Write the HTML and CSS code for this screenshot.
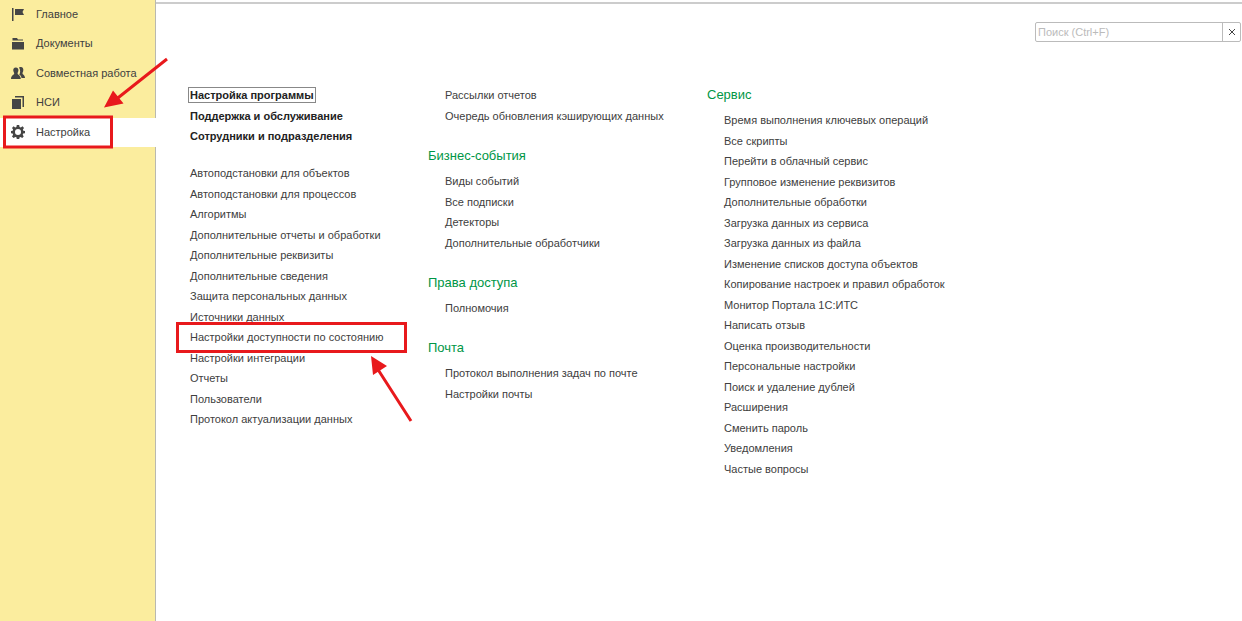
FILE: index.html
```html
<!DOCTYPE html>
<html lang="ru">
<head>
    <meta charset="UTF-8">
    <meta name="viewport" content="width=device-width, initial-scale=1.0">
    <title>Настройка</title>
    <link rel="stylesheet" href="styles.css">
</head>
<body>
    <!-- Sections -->
    <nav class="sidebar">
        <a href="#" class="section">
            <svg class="icon" viewBox="0 0 14 14"><path d="M1 1h1.500v13H1zM4 2h9l-1.500 3L13 8H4z"/></svg>
            Главное
        </a>
        <a href="#" class="section">
            <svg class="icon" viewBox="0 0 14 14"><path d="M1.500 4.500V2h4.500l1 1.500h5v1zM1 6h12v7.500H1z"/></svg>
            Документы
        </a>
        <a href="#" class="section">
            <svg class="icon" viewBox="0 0 14 14"><path d="M8 1.500c3-1.500 5 .5 4.200 3.500-.2 1-.7 1.500-.7 2.500 0 1 2.500 1.500 2.500 4.500h-3.500c-.3-2-1-2.500-2.200-3.200C9.500 6.500 9.500 4 8 1.500z"/><path d="M4.800 1.500c2 0 2.900 1.400 2.600 3.300-.2 1.200-.8 1.800-.8 2.700 0 1.500 3.200 1.500 3.200 5.500H0c0-4 3.200-4 3.200-5.500 0-.9-.7-1.500-.9-2.700C2 2.900 2.900 1.500 4.800 1.500z"/></svg>
            Совместная работа
        </a>
        <a href="#" class="section">
            <svg class="icon" viewBox="0 0 14 14"><path d="M1 4h9v10H1zM4 1h9v11h-1.500V2.500H4z"/></svg>
            НСИ
        </a>
        <a href="#" class="section active">
            <svg class="icon" viewBox="0 0 14 14"><path fill-rule="evenodd" d="M5.800 0h2.400l.4 2 1.200.5L11.500 1.300l1.500 1.600-1.100 1.700.4 1.100 1.700.3v2.200l-1.800.4-.5 1.200 1 1.600-1.500 1.600-1.600-1.100-1.100.5-.3 1.800H5.800l-.4-1.900-1.100-.4-1.700 1.100L1 11.400l1.100-1.600-.5-1.200L0 8.200V6l1.700-.3.400-1.100L1 2.900l1.600-1.600 1.600 1.200 1.200-.5zM7 4a3 3 0 1 0 0 6 3 3 0 0 0 0-6z"/></svg>
            Настройка
        </a>
    </nav>

    <main class="content">
        <form class="search">
            <input type="text" class="search-input" placeholder="Поиск (Ctrl+F)" aria-label="Поиск">
            <button type="reset" class="search-clear" aria-label="Очистить">
                <svg viewBox="0 0 8 8"><path d="M1 1l6 6M7 1L1 7"/></svg>
            </button>
        </form>

        <!-- Commands -->
        <div class="columns">
            <div class="column">
                <ul class="commands main-commands">
                    <li><a href="#" class="focused">Настройка программы</a></li>
                    <li><a href="#">Поддержка и обслуживание</a></li>
                    <li><a href="#">Сотрудники и подразделения</a></li>
                </ul>
                <ul class="commands">
                    <li><a href="#">Автоподстановки для объектов</a></li>
                    <li><a href="#">Автоподстановки для процессов</a></li>
                    <li><a href="#">Алгоритмы</a></li>
                    <li><a href="#">Дополнительные отчеты и обработки</a></li>
                    <li><a href="#">Дополнительные реквизиты</a></li>
                    <li><a href="#">Дополнительные сведения</a></li>
                    <li><a href="#">Защита персональных данных</a></li>
                    <li><a href="#">Источники данных</a></li>
                    <li><a href="#">Настройки доступности по состоянию</a></li>
                    <li><a href="#">Настройки интеграции</a></li>
                    <li><a href="#">Отчеты</a></li>
                    <li><a href="#">Пользователи</a></li>
                    <li><a href="#">Протокол актуализации данных</a></li>
                </ul>
            </div>

            <div class="column">
                <ul class="commands nested">
                    <li><a href="#">Рассылки отчетов</a></li>
                    <li><a href="#">Очередь обновления кэширующих данных</a></li>
                </ul>
                <section class="group">
                    <h2>Бизнес-события</h2>
                    <ul class="commands nested">
                        <li><a href="#">Виды событий</a></li>
                        <li><a href="#">Все подписки</a></li>
                        <li><a href="#">Детекторы</a></li>
                        <li><a href="#">Дополнительные обработчики</a></li>
                    </ul>
                </section>
                <section class="group">
                    <h2>Права доступа</h2>
                    <ul class="commands nested">
                        <li><a href="#">Полномочия</a></li>
                    </ul>
                </section>
                <section class="group">
                    <h2>Почта</h2>
                    <ul class="commands nested">
                        <li><a href="#">Протокол выполнения задач по почте</a></li>
                        <li><a href="#">Настройки почты</a></li>
                    </ul>
                </section>
            </div>

            <div class="column">
                <section class="group">
                    <h2>Сервис</h2>
                    <ul class="commands nested">
                        <li><a href="#">Время выполнения ключевых операций</a></li>
                        <li><a href="#">Все скрипты</a></li>
                        <li><a href="#">Перейти в облачный сервис</a></li>
                        <li><a href="#">Групповое изменение реквизитов</a></li>
                        <li><a href="#">Дополнительные обработки</a></li>
                        <li><a href="#">Загрузка данных из сервиса</a></li>
                        <li><a href="#">Загрузка данных из файла</a></li>
                        <li><a href="#">Изменение списков доступа объектов</a></li>
                        <li><a href="#">Копирование настроек и правил обработок</a></li>
                        <li><a href="#">Монитор Портала 1С:ИТС</a></li>
                        <li><a href="#">Написать отзыв</a></li>
                        <li><a href="#">Оценка производительности</a></li>
                        <li><a href="#">Персональные настройки</a></li>
                        <li><a href="#">Поиск и удаление дублей</a></li>
                        <li><a href="#">Расширения</a></li>
                        <li><a href="#">Сменить пароль</a></li>
                        <li><a href="#">Уведомления</a></li>
                        <li><a href="#">Частые вопросы</a></li>
                    </ul>
                </section>
            </div>
        </div>
    </main>

    <!-- Red frames and arrows over the page -->
    <svg class="marks" width="420" height="430" viewBox="0 0 420 430">
        <rect x="4.500" y="117" width="107" height="30"/>
        <rect x="177.500" y="323.500" width="228" height="28"/>
        <path d="M167 59L114 101M411 421L377 368"/>
        <path class="head" d="M104 107.500L113 90.500L123.500 103.500zM371 356L387 366L373 375z"/>
    </svg>
</body>
</html>
```
FILE: styles.css
```css
* {
    box-sizing: border-box;
}
body {
    display: flex;
    min-height: 100vh;
    margin: 0;
    font-family: "Liberation Sans", Arial, sans-serif;
    font-size: 11px;
    color: #404040;
    background-color: #fff;
}
a {
    color: inherit;
    text-decoration: none;
}
.sidebar {
    flex: none;
    width: 156px;
    background-color: #fbed9e;
    border-right: 1px solid #b9b9b0;
}
.section {
    display: flex;
    align-items: center;
    gap: 11px;
    height: 29px;
    padding: 0 0 2px 11px;
    white-space: nowrap;
}
.section:nth-child(even) {
    height: 30px;
}
.section.active {
    margin-right: -1px;
    background-color: #fff;
}
.icon {
    flex: none;
    width: 14px;
    height: 14px;
    fill: #454545;
}
.content {
    flex: 1;
    margin-top: 2px;
    border-top: 2px solid #ccc;
}
.search {
    display: flex;
    width: 206px;
    height: 20px;
    margin: 18px 1px 0 auto;
    border: 1px solid #bbb;
    border-radius: 2px;
}
.search-input {
    flex: 1;
    min-width: 0;
    padding: 0 2px;
    border: none;
    outline: none;
    background: none;
    font: inherit;
}
.search-input::placeholder {
    color: #bbb;
}
.search-clear {
    display: flex;
    align-items: center;
    justify-content: center;
    width: 18px;
    padding: 0;
    border: none;
    border-left: 1px solid #bbb;
    background: none;
    cursor: pointer;
}
.search-clear svg {
    width: 8px;
    height: 8px;
    stroke: #444;
}
.columns {
    display: grid;
    grid-template-columns: 238px 279px 1fr;
    padding: 43px 0 0 34px;
}
h2 {
    margin: 0 0 5px;
    font-size: 13px;
    font-weight: normal;
    line-height: 20px;
    color: #009646;
}
.commands {
    margin: 0;
    padding: 0;
    list-style: none;
    line-height: 20px;
    white-space: nowrap;
}
.commands li:nth-child(even) {
    padding-top: 1px;
}
.commands + .group,
.group + .group {
    margin-top: 20px;
}
.nested {
    padding-left: 17px;
}
.main-commands {
    margin-bottom: 17px;
    font-weight: bold;
    color: #222;
}
.focused {
    outline: 1px solid #888;
    outline-offset: 1px;
}
.marks {
    position: absolute;
    top: 0;
    left: 0;
    fill: none;
    stroke: #e8191c;
    stroke-width: 3;
    pointer-events: none;
}
.head {
    fill: #e8191c;
    stroke: none;
}
```
